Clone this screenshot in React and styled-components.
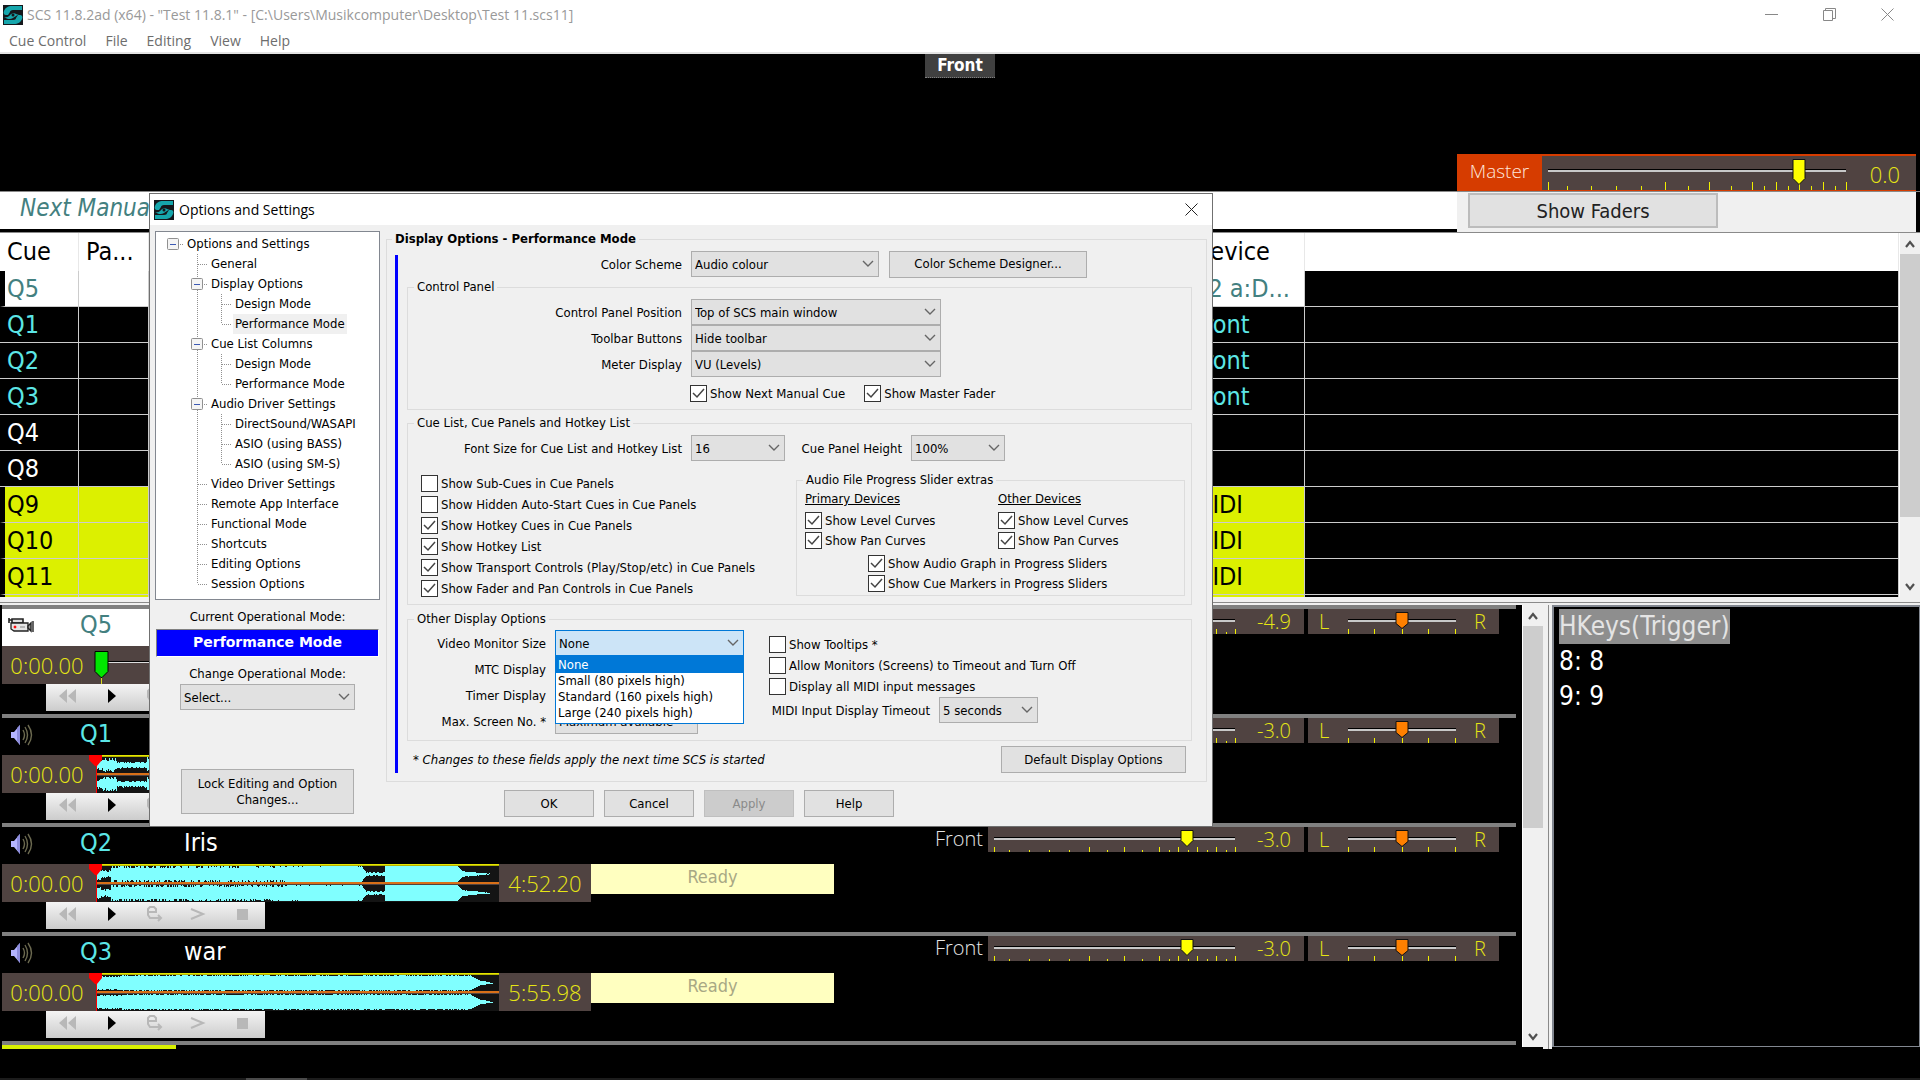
import React, { useState } from 'react'
import styled, { createGlobalStyle } from 'styled-components'

const uiFont = '"DejaVu Sans Condensed", "DejaVu Sans", sans-serif'
const titleFont = '"Open Sans", "Noto Sans", sans-serif'

const GlobalStyle = createGlobalStyle`
  * {
    box-sizing: border-box;
  }
  body {
    margin: 0;
    background: black;
    color: black;
    font-family: ${uiFont};
    font-size: 13px;
  }
  button, input, select {
    font: inherit;
    color: inherit;
    margin: 0;
  }
  svg {
    display: block;
    flex: none;
  }
`

/* ---------- main window ---------- */

const Page = styled.div`
  position: relative;
  display: flex;
  flex-direction: column;
  min-height: 100vh;
  overflow: hidden;
`
const TitleBar = styled.header`
  display: flex;
  align-items: center;
  gap: 4px;
  height: 29px;
  padding: 0 4px 0 3px;
  background: white;
  color: #999999;
  font-family: ${titleFont};
  font-size: 14px;
`
const WindowButtons = styled.div`
  display: flex;
  margin-left: auto;
`
const WindowButton = styled.button`
  display: flex;
  align-items: center;
  justify-content: center;
  width: 58px;
  height: 28px;
  padding: 0;
  border: none;
  background: none;
`
const MenuBar = styled.nav`
  display: flex;
  gap: 19px;
  height: 25px;
  padding: 0 9px;
  border-bottom: 2px solid #e4e4e4;
  background: white;
`
const MenuItem = styled.button`
  padding: 0;
  border: none;
  background: none;
  color: #6d6d6d;
  font-family: ${titleFont};
  font-size: 14px;
  line-height: 24px;
`
const ControlPanel = styled.section`
  display: grid;
  grid-template-columns: 1fr auto 1fr;
  height: 137px;
`
const OutputName = styled.div`
  grid-column: 2;
  align-self: start;
  width: 70px;
  height: 24px;
  background: #404040;
  border-bottom: 1px dotted #808080;
  color: white;
  font-size: 17px;
  font-weight: bold;
  line-height: 23px;
  text-align: center;
`
const MasterFader = styled.div`
  grid-column: 3;
  place-self: end;
  display: flex;
  width: 459px;
  height: 37px;
  margin-right: 4px;
  border: solid #d63c00;
  border-width: 2px 0 1px;
  background: #504341;
`
const MasterLabel = styled.label`
  width: 85px;
  background: #d63c00;
  color: #ffe6dc;
  font-family: ${titleFont};
  font-size: 19px;
  font-weight: 300;
  line-height: 30px;
  text-align: center;
`
const NextRow = styled.section`
  display: flex;
  height: 42px;
  padding-right: 4px;
  border-top: 1px solid #8a8a8a;
  border-bottom: 1px solid #8a8a8a;
`
const NextBand = styled.div`
  flex: 1;
  padding-left: 20px;
  border-bottom: 3px solid black;
  background: white;
`
const NextCue = styled.div`
  width: 129px;
  overflow: hidden;
  color: #438080;
  font-size: 24px;
  font-style: italic;
  line-height: 32px;
  white-space: nowrap;
`
const FadersBox = styled.div`
  width: 459px;
  padding: 1px 11px;
  background: #f0f0f0;
`
const FadersButton = styled.button`
  width: 250px;
  height: 35px;
  border: 2px solid #bcbcbc;
  background: #e1e1e1;
  color: #222222;
  font-size: 20px;
`
const CueList = styled.section`
  display: flex;
  height: 364px;
  overflow: hidden;
`
const CueScroll = styled.div`
  flex: 1;
  overflow: hidden;
`
const CueTable = styled.table`
  width: 100%;
  border-collapse: separate;
  border-spacing: 0;
  table-layout: fixed;
  font-size: 25px;
  line-height: 34px;
`
const Th = styled.th`
  width: ${(p) => p.$w};
  height: 38px;
  padding: 0 0 0 7px;
  border-right: 1px solid #e8e8e8;
  background: white;
  font-weight: normal;
  text-align: left;
`
const CueRow = styled.tr`
  background: ${(p) => p.$bg};
  color: ${(p) => p.$fg};
`
const Td = styled.td`
  height: 36px;
  padding: 0 0 0 ${(p) => (p.$strip ? 2 : 7)}px;
  border-left: ${(p) => (p.$strip ? '5px solid black' : 'none')};
  border-right: 1px solid #cccccc;
  border-bottom: 1px solid #cccccc;
  background: ${(p) => (p.$empty ? 'black' : 'none')};
  white-space: nowrap;
`
const ScrollBar = styled.div`
  display: flex;
  flex-direction: column;
  justify-content: space-between;
  align-items: center;
  width: 21px;
  background: #f0f0f0;
  border-left: 1px solid white;
`
const ScrollButton = styled.button`
  display: flex;
  align-items: center;
  justify-content: center;
  width: 100%;
  height: 21px;
  padding: 0;
  border: none;
  background: none;
`
const ScrollThumb = styled.div`
  width: 100%;
  height: ${(p) => p.$size};
  margin-bottom: auto;
  background: #cdcdcd;
`
const Splitter = styled.div`
  height: 8px;
  background: linear-gradient(#f0f0f0 5px, #8a8a8a 5px 6px, #f0f0f0 6px);
`
const Work = styled.main`
  display: flex;
  align-items: flex-start;
`
const Panels = styled.div`
  flex: 1;
  padding: 0 6px 0 2px;
`
const Panel = styled.article`
  height: 109px;
  border-top: 4px solid #808080;
`
const PanelTop = styled.div`
  display: flex;
  height: 37px;
  padding-right: 17px;
  background: linear-gradient(to right, ${(p) => (p.$current ? 'white' : 'black')} 1180px, black 1180px);
`
const PanelIcon = styled.div`
  width: 78px;
  padding: 5px 6px;
`
const PanelCue = styled.div`
  width: 104px;
  color: ${(p) => (p.$current ? '#438080' : '#5ce6e6')};
  font-size: 25px;
  line-height: 32px;
`
const PanelTitle = styled.div`
  flex: 1;
  color: white;
  font-size: 25px;
  line-height: 32px;
`
const DeviceName = styled.div`
  margin-right: 5px;
  color: #e6e6e6;
  font-family: ${titleFont};
  font-size: 20px;
  font-weight: 300;
  line-height: 24px;
`
const FaderBox = styled.div`
  display: flex;
  align-items: center;
  justify-content: space-between;
  width: ${(p) => p.$w}px;
  height: 25px;
  margin-right: 4px;
  padding: 0 13px 0 ${(p) => p.$pad}px;
  background: #504341;
  color: #e6e614;
  font-family: ${titleFont};
  font-size: 20px;
  font-weight: 300;
  &:last-child {
    margin-right: 0;
  }
`
const SliderStack = styled.div`
  display: grid;
  & > * {
    grid-area: 1 / 1;
  }
`
const Range = styled.input`
  appearance: none;
  width: ${(p) => p.$w}px;
  height: ${(p) => p.$h}px;
  background: linear-gradient(
    transparent ${(p) => p.$y}px,
    black ${(p) => p.$y}px ${(p) => p.$y + 1}px,
    #c8c8c8 ${(p) => p.$y + 1}px ${(p) => p.$y + 3}px,
    transparent ${(p) => p.$y + 3}px
  );
  &::-webkit-slider-thumb {
    appearance: none;
    width: 14px;
    height: 20px;
    background: transparent;
  }
`
const MasterValue = styled.output`
  flex: 1;
  padding-top: 3px;
  color: #e6e614;
  font-family: ${titleFont};
  font-size: 22px;
  font-weight: 300;
  line-height: 30px;
  text-align: center;
`
const PanelMiddle = styled.div`
  display: flex;
  width: 832px;
`
const ProgressBox = styled.div`
  display: flex;
  width: 589px;
  height: 38px;
  background: #504341;
`
const Time = styled.div`
  width: ${(p) => p.$w}px;
  padding-left: ${(p) => p.$pad || 0}px;
  color: #e6e614;
  font-family: ${titleFont};
  font-size: 22px;
  font-weight: 300;
  line-height: 38px;
  text-align: center;
`
const Status = styled.div`
  flex: 1;
  height: 30px;
  background: #ffffc0;
  color: #a8a884;
  font-size: 18px;
  line-height: 26px;
  text-align: center;
`
const Transport = styled.div`
  display: flex;
  width: 219px;
  height: 27px;
  margin-left: 44px;
  background: linear-gradient(#f4f4f4, #cccccc);
`
const TransportButton = styled.button`
  display: flex;
  flex: 1;
  align-items: center;
  justify-content: center;
  padding: 0 2px 3px 0;
  border: none;
  background: none;
`
const PanelEnd = styled.div`
  height: 8px;
  border-top: 4px solid #808080;
`
const YellowBar = styled.div`
  width: 174px;
  height: 4px;
  background: #d8f000;
`
const Gap = styled.div`
  align-self: stretch;
  width: 9px;
  background: linear-gradient(to right, #f0f0f0 5px, #8a8a8a 5px 6px, #f0f0f0 6px);
`
const BottomScroll = styled(ScrollBar)`
  height: 442px;
`
const HotkeyList = styled.ul`
  width: 368px;
  height: 442px;
  margin: 0;
  padding: 2px 5px;
  border: 1px solid #828790;
  border-width: 2px 1px 1px 2px;
  color: white;
  font-size: 26px;
  line-height: 35px;
  list-style: none;
`
const HotkeyHead = styled.span`
  display: inline-block;
  background: #8e8e8e;
  color: #e4e4e4;
`
const Footer = styled.footer`
  height: 2px;
  margin-top: auto;
  background: linear-gradient(to right, #1c1c1c 246px, #4a4a4a 246px 307px, #1c1c1c 307px);
`

/* ---------- options dialog ---------- */

const Dialog = styled.div`
  position: absolute;
  top: 193px;
  left: 149px;
  width: 1064px;
  padding-bottom: 4px;
  border: 1px solid #707070;
  background: #f0f0f0;
`
const DialogTitle = styled.div`
  display: flex;
  align-items: center;
  gap: 5px;
  height: 31px;
  padding-left: 4px;
  background: white;
  font-family: ${titleFont};
  font-size: 14px;
`
const CloseButton = styled(WindowButton)`
  width: 42px;
  margin-left: auto;
`
const DialogBody = styled.div`
  display: flex;
  gap: 6px;
  padding: 6px 5px 5px;
`
const Side = styled.div`
  display: flex;
  flex-direction: column;
  align-items: center;
  width: 225px;
`
const Tree = styled.ul`
  width: 100%;
  height: 369px;
  margin: 0 0 7px;
  padding: 2px 5px;
  border: 1px solid #828790;
  background: white;
  list-style: none;
`
const TreeItem = styled.li`
  display: flex;
  height: 20px;
  padding-left: ${(p) => (p.$depth ? 24 : 0)}px;
`
const TreeText = styled.span`
  padding: 0 2px;
  background: ${(p) => (p.$selected ? '#f0f0f0' : 'none')};
  line-height: 20px;
`
const SideLabel = styled.label`
  line-height: 20px;
`
const ModeBox = styled.div`
  width: 223px;
  height: 28px;
  margin: 2px 0 7px;
  border: 1px solid;
  border-color: #808080 white white #808080;
  background: blue;
  color: white;
  font-family: "DejaVu Sans", sans-serif;
  font-size: 14px;
  font-weight: bold;
  line-height: 24px;
  text-align: center;
`
const Button = styled.button`
  width: ${(p) => p.$w}px;
  height: ${(p) => p.$h || 27}px;
  padding: 0;
  border: 1px solid #adadad;
  background: #e1e1e1;
  line-height: 16px;
  &:disabled {
    border-color: #bfbfbf;
    background: #cccccc;
    color: #8a8a8a;
  }
`
const Main = styled.div`
  flex: 1;
`
const Group = styled.fieldset`
  min-width: 0;
  margin: 0;
  padding: 0;
  border: 1px solid #dcdcdc;
`
const PageGroup = styled(Group)`
  height: 551px;
`
const Legend = styled.legend`
  margin-left: ${(p) => (p.$bold ? 5 : 6)}px;
  padding: 0 3px;
  line-height: 16px;
  font-weight: ${(p) => (p.$bold ? 'bold' : 'normal')};
`
const Inner = styled.div`
  display: flex;
  gap: 9px;
  padding: 4px 14px 0 8px;
`
const BlueLine = styled.div`
  width: 3px;
  height: 518px;
  margin-top: 4px;
  background: blue;
`
const Fields = styled.div`
  flex: 1;
`
const Line = styled.div`
  display: flex;
  align-items: center;
  height: 26px;
`
const FieldLabel = styled.label`
  width: ${(p) => p.$w}px;
  padding-right: 9px;
  text-align: right;
`
const Combo = styled.span`
  display: grid;
  align-items: center;
  width: ${(p) => p.$w}px;
  height: 26px;
  & > * {
    grid-area: 1 / 1;
  }
  & > svg {
    margin-right: 5px;
    justify-self: end;
    pointer-events: none;
  }
`
const SelectBox = styled.select`
  appearance: none;
  width: 100%;
  height: 26px;
  padding: 0 3px;
  border: 1px solid ${(p) => (p.$open ? '#0078d7' : '#adadad')};
  border-radius: 0;
  background: ${(p) => (p.$open ? '#cce4f7' : '#e1e1e1')};
`
const CheckLabel = styled.label`
  display: flex;
  align-items: center;
  gap: 3px;
  height: ${(p) => p.$h || 21}px;
  margin-left: ${(p) => p.$indent || 0}px;
`
const Tick = styled.span`
  display: grid;
  place-items: center;
  & > * {
    grid-area: 1 / 1;
  }
  & > svg {
    pointer-events: none;
  }
`
const CheckInput = styled.input`
  appearance: none;
  width: 17px;
  height: 17px;
  border: 1px solid #333333;
  background: white;
`
const ControlGroup = styled(Group)`
  height: 131px;
  margin-top: 2px;
`
const ListGroup = styled(Group)`
  height: 190px;
  margin-top: 5px;
`
const OtherGroup = styled(Group)`
  height: 130px;
  margin-top: 6px;
`
const ComboStack = styled.div`
  padding-top: 4px;
`
const CheckRow = styled.div`
  display: flex;
  gap: 19px;
  padding: 6px 0 0 282px;
`
const Columns = styled.div`
  display: flex;
  padding-top: ${(p) => p.$top}px;
`
const ChecksColumn = styled.div`
  width: ${(p) => p.$w}px;
  padding: ${(p) => p.$pad || '0'};
`
const ExtrasGroup = styled(Group)`
  width: 389px;
  height: 124px;
`
const Devices = styled.div`
  display: grid;
  grid-template-columns: 193px 1fr;
  padding: 2px 0 3px 8px;
`
const DeviceHead = styled.u`
  height: 20px;
  line-height: 18px;
`
const DropWrap = styled.div`
  position: relative;
`
const DropList = styled.ul`
  position: absolute;
  top: 26px;
  left: 147px;
  z-index: 1;
  width: 189px;
  height: 68px;
  margin: 0;
  padding: 0;
  border: 1px solid #0078d7;
  background: white;
  list-style: none;
`
const DropOption = styled.li`
  padding-left: 2px;
  background: ${(p) => (p.$active ? '#0078d7' : 'none')};
  color: ${(p) => (p.$active ? 'white' : 'black')};
  line-height: 16px;
`
const NoteRow = styled.div`
  display: flex;
  align-items: center;
  justify-content: space-between;
  padding: 5px 6px 0 6px;
`
const DialogButtons = styled.div`
  display: flex;
  gap: 10px;
  padding: 8px 0 0 118px;
`

const Logo = () => (
  <svg width="20" height="20" viewBox="0 0 20 20">
    <rect width="20" height="20" fill="#15181c" />
    <path d="M19 1v4h-9c-2 0-3 1-3 2l-2 3H3C1 10 0 8 1 6c1-3 4-5 8-5z" fill="#16a6ac" />
    <path d="M1 19v-4h9c2 0 3-1 3-2l2-3h2c2 0 3 2 2 4-1 3-4 5-8 5z" fill="#16a6ac" />
    <path d="M1 12c4 1 5-1 7-3 2-1 4-1 5 0l3 1c-3 0-4 2-6 3-3 2-6 1-9-1z" fill="#16a6ac" />
    <circle cx="10" cy="10" r="1.500" fill="#15181c" />
  </svg>
)

const Cross = ({ size = 13, color = '#222222' }) => (
  <svg width={size} height={size} viewBox="0 0 13 13" fill="none" stroke={color}>
    <path d="M0.5 0.5l12 12M12.5 0.5l-12 12" />
  </svg>
)

const Chevron = () => (
  <svg width="12" height="8" viewBox="0 0 12 8" fill="none" stroke="#666666" strokeWidth="1.4">
    <path d="M1 1l5 5 5-5" />
  </svg>
)

const Arrow = ({ up }) => (
  <svg width="10" height="8" viewBox="0 0 10 8" fill="none" stroke="#505050" strokeWidth="2.2">
    <path d={up ? 'M1 7l4-5 4 5' : 'M1 1l4 5 4-5'} />
  </svg>
)

const Speaker = () => (
  <svg width="26" height="24" viewBox="0 0 26 24" fill="none">
    <path d="M3 9h3l6-7v20l-6-7H3z" fill="#b4b4ff" />
    <path d="M9 5l3-3v20l-3-4z" fill="#8c8cdc" />
    <path d="M15 7q3 5 0 10M17 4q5 8 0 16M20 2q7 10 0 20" stroke="#6c6a50" strokeWidth="1.4" />
  </svg>
)

const Camera = () => (
  <svg width="27" height="24" viewBox="0 0 27 24" stroke="#222222">
    <path d="M1 4v5M1 6h3M4 5h11v4H4z" fill="#dddddd" strokeWidth="1.6" />
    <path d="M3 9h17v8H6l-3-2z" fill="#e6e6e6" strokeWidth="1.3" />
    <path d="M20 12l3-3v8l-3-3zM25 7v11" fill="#999999" strokeWidth="1.4" />
    <circle cx="7" cy="13" r="1" fill="red" stroke="red" />
    <path d="M12 13h5" stroke="#888888" />
  </svg>
)

const transportIcons = {
  rewind: <path d="M9 1v14L1 8zM18 1v14l-8-7z" fill="#b8b8b8" />,
  play: <path d="M6 1l8 7-8 7z" fill="black" />,
  release: (
    <path
      d="M3 6h8V3L9 1H5L3 3v6l2 3h11M13 9l3 3-3 3"
      fill="none"
      stroke="#b8b8b8"
      strokeWidth="2"
    />
  ),
  next: <path d="M2 3l12 5-12 5" fill="none" stroke="#b8b8b8" strokeWidth="2" />,
  stop: <path d="M4 3h11v11H4z" fill="#b8b8b8" />,
}

const levelTicks = [0, 15, 35, 55, 75, 95, 113, 130, 148, 165, 175, 184, 194, 203, 213, 222, 232, 241]
const tallTicks = [0, 95, 130, 165, 184, 203, 222, 241]

const LevelSlider = ({ id, label, w = 241, h = 25, pos }) => {
  const [value, setValue] = useState(pos)
  const s = w / 241
  const x = Math.round(value * s) + 7
  const b = h === 25 ? 19 : 28
  return (
    <SliderStack>
      <Range id={id} type="range" min="0" max="241" value={value} aria-label={label} $w={w} $h={h} $y={h === 25 ? 10 : 13} onChange={(e) => setValue(Number(e.target.value))} />
      <svg width={w + 14} height={h} style={{ marginLeft: -7, pointerEvents: 'none' }}>
        {levelTicks.map((t) => (
          <rect key={t} x={Math.round(t * s) + 7} y={h - (tallTicks.includes(t) ? (h === 25 ? 5 : 8) : h === 25 ? 2 : 4)} width="1" height="8" fill="#f0f000" />
        ))}
        <path d={`M${x - 6} 3.5h12v${b - 9}l-6 6-6-6z`} fill="yellow" stroke="#111111" />
      </svg>
    </SliderStack>
  )
}

const PanSlider = () => {
  const [value, setValue] = useState(54)
  return (
    <SliderStack>
      <Range type="range" min="0" max="108" value={value} aria-label="Pan" $w={108} $h={25} $y={10} onChange={(e) => setValue(Number(e.target.value))} />
      <svg width="108" height="25" style={{ pointerEvents: 'none' }}>
        {[0, 26, 54, 80, 107].map((t) => (
          <rect key={t} x={t} y="20" width="1" height="5" fill="#f0f000" />
        ))}
        <path d={`M${value - 6} 3.5h12v11l-6 5-6-5z`} fill="#ff8000" stroke="#111111" />
      </svg>
    </SliderStack>
  )
}

/* peak height (0..1) at each pixel of a track */
const envelopes = {
  Q1: (x, r) => (x < 6 ? 0.3 + r * 0.4 : x < 20 ? 0.5 + r * 0.4 : x < 50 ? 0.22 + r * 0.22 : 0.6 + r * 0.4),
  Q2: (x, r) => {
    if (x < 4) return 0.6 + r * 0.2
    if (x < 14) return 0.25 + r * 0.25
    if (x < 90) return r > 0.55 ? 1 : 0.7 + r * 0.3
    if (x < 190) return r > 0.35 ? 1 : 0.75 + r * 0.4
    if (x < 264) return r > 0.06 ? 1 : 0.85
    if (x < 269) return 1 - (x - 264) * 0.16
    if (x < 288) return 0.12 + r * 0.14
    if (x < 360) return 1
    if (x < 365) return 1 - (x - 360) * 0.14
    return Math.max(0, 0.32 - (x - 365) * 0.012 + r * 0.08)
  },
  Q3: (x, r) => {
    if (x < 374) return (x < 25 ? 0.72 : 0.84) + r * 0.16
    if (x < 384) return 0.85 - (x - 374) * 0.06
    return Math.max(0, 0.3 - (x - 384) * 0.028)
  },
}

const wavePath = (cue, mid, half, seed) => {
  const end = cue === 'Q2' ? 393 : cue === 'Q3' ? 396 : 402
  let n = seed
  const rand = () => {
    n = (n * 16807) % 2147483647
    return n / 2147483647
  }
  let d = ''
  for (let x = 0; x < end; x++) {
    const up = Math.round(envelopes[cue](x, rand()) * half)
    const down = Math.round(envelopes[cue](x, rand()) * half)
    d += `M${x} ${mid - up}h1v${Math.max(1, up + down)}h-1z`
  }
  return d
}

const Wave = ({ cue }) => (
  <svg width="411" height="38" viewBox="-9 0 411 38">
    <rect width="402" height="38" fill="#141414" />
    <path d={wavePath(cue, 10, 8, 7919)} fill="#80ffff" />
    <path d={wavePath(cue, 29, 8, 10007)} fill="#80ffff" />
    <rect width="402" height="1" fill="#e6e600" />
    <rect width="402" height="1" y="1" fill="#b4b400" />
    <rect width="402" height="2" y="18" fill="#d87018" />
    <rect width="402" height="1" y="20" fill="#504341" />
    <path d="M-8 0h13v5l-5 6h-2l-6-6z" fill="red" />
    <rect x="-1" width="1" height="38" fill="red" />
  </svg>
)

const VideoProgress = () => (
  <svg width="411" height="38" viewBox="-9 0 411 38">
    <path d="M4 16.5h390" stroke="#dddddd" />
    <path d="M4 15.5h390" stroke="black" />
    <rect x="4" y="32" width="1" height="6" fill="#d8d81e" />
    <path d="M-2 5.500h13v20l-6 6h-1l-6-6z" fill="#00e600" stroke="black" />
  </svg>
)

const ScrollArrows = ({ thumb, as: Bar = ScrollBar }) => (
  <Bar>
    <ScrollButton aria-label="Scroll up"><Arrow up /></ScrollButton>
    <ScrollThumb $size={thumb} />
    <ScrollButton aria-label="Scroll down"><Arrow /></ScrollButton>
  </Bar>
)

const cues = [
  { cue: 'Q5', device: 'V2 a:D...', bg: 'white', fg: '#438080', strip: true },
  { cue: 'Q1', device: 'Front', bg: 'black', fg: '#5ce6e6' },
  { cue: 'Q2', device: 'Front', bg: 'black', fg: '#5ce6e6' },
  { cue: 'Q3', device: 'Front', bg: 'black', fg: '#5ce6e6' },
  { cue: 'Q4', device: '', bg: 'black', fg: 'white' },
  { cue: 'Q8', device: '', bg: 'black', fg: 'white' },
  { cue: 'Q9', device: 'MIDI', bg: '#dcf000', fg: 'black', strip: true },
  { cue: 'Q10', device: 'MIDI', bg: '#dcf000', fg: 'black', strip: true },
  { cue: 'Q11', device: 'MIDI', bg: '#dcf000', fg: 'black', strip: true },
  { cue: '', device: '', bg: '#dcf000', fg: 'black', strip: true },
]

const panels = [
  { cue: 'Q5', title: '', device: '', level: '-4.9', pos: 184, current: true },
  { cue: 'Q1', title: '', device: 'Front', level: '-3.0', pos: 193 },
  { cue: 'Q2', title: 'Iris', device: 'Front', level: '-3.0', pos: 193, length: '4:52.20', status: 'Ready' },
  { cue: 'Q3', title: 'war', device: 'Front', level: '-3.0', pos: 193, length: '5:55.98', status: 'Ready' },
]

const tree = [
  { text: 'Options and Settings', depth: 0, box: true },
  { text: 'General', depth: 1 },
  { text: 'Display Options', depth: 1, box: true },
  { text: 'Design Mode', depth: 2 },
  { text: 'Performance Mode', depth: 2, last: true, selected: true },
  { text: 'Cue List Columns', depth: 1, box: true },
  { text: 'Design Mode', depth: 2 },
  { text: 'Performance Mode', depth: 2, last: true },
  { text: 'Audio Driver Settings', depth: 1, box: true },
  { text: 'DirectSound/WASAPI', depth: 2 },
  { text: 'ASIO (using BASS)', depth: 2 },
  { text: 'ASIO (using SM-S)', depth: 2, last: true },
  { text: 'Video Driver Settings', depth: 1 },
  { text: 'Remote App Interface', depth: 1 },
  { text: 'Functional Mode', depth: 1 },
  { text: 'Shortcuts', depth: 1 },
  { text: 'Editing Options', depth: 1 },
  { text: 'Session Options', depth: 1, last: true },
]

const Guide = ({ box, last, line, root }) => (
  <svg width="24" height="20" fill="none" stroke="#909090" strokeDasharray="1 1">
    {!root && <path d={last ? 'M12.5 0v10' : 'M12.5 0v20'} />}
    {!line && <path d="M13 10.5h10" />}
    {box && (
      <g strokeDasharray="none">
        <rect x="6.500" y="4.500" width="11" height="11" rx="1" fill="#f4f4f4" />
        <path d="M9 10.500h6" stroke="#3c5ab4" />
      </g>
    )}
  </svg>
)

const Select = ({ id, w, options, open, label }) => (
  <Combo $w={w}>
    <SelectBox id={id} $open={open} aria-label={label}>
      {options.map((o) => (
        <option key={o}>{o}</option>
      ))}
    </SelectBox>
    <Chevron />
  </Combo>
)

const Check = ({ label, on, h, indent }) => {
  const [checked, setChecked] = useState(!!on)
  return (
    <CheckLabel $h={h} $indent={indent}>
      <Tick>
        <CheckInput type="checkbox" checked={checked} onChange={() => setChecked(!checked)} />
        {checked && (
          <svg width="13" height="11" viewBox="0 0 13 11" fill="none" stroke="#444444" strokeWidth="1.5">
            <path d="M1 5l4 4 7-8" />
          </svg>
        )}
      </Tick>
      {label}
    </CheckLabel>
  )
}

const Field = ({ id, label, labelWidth, w, options, open }) => (
  <Line>
    <FieldLabel htmlFor={id} $w={labelWidth}>{label}</FieldLabel>
    <Select id={id} w={w} options={options} open={open} />
  </Line>
)

const sizes = ['None', 'Small (80 pixels high)', 'Standard (160 pixels high)', 'Large (240 pixels high)']

const OptionsDialog = () => {
  return (
    <Dialog role="dialog" aria-label="Options and Settings">
      <DialogTitle>
        <Logo />
        Options and Settings
        <CloseButton aria-label="Close"><Cross /></CloseButton>
      </DialogTitle>
      <DialogBody>
        <Side>
          <Tree role="tree">
            {tree.map((t, i) => (
              <TreeItem key={i} role="treeitem" $depth={t.depth}>
                {t.depth === 2 && <Guide line />}
                <Guide box={t.box} last={t.last} root={t.depth === 0} />
                <TreeText $selected={t.selected}>{t.text}</TreeText>
              </TreeItem>
            ))}
          </Tree>
          <SideLabel as="div">Current Operational Mode:</SideLabel>
          <ModeBox>Performance Mode</ModeBox>
          <SideLabel htmlFor="mode">Change Operational Mode:</SideLabel>
          <Select id="mode" w={175} options={['Select...']} />
          <Columns $top={59}>
            <Button $w={173} $h={45}>Lock Editing and Option<br />Changes...</Button>
          </Columns>
        </Side>
        <Main>
          <PageGroup>
            <Legend $bold>Display Options - Performance Mode</Legend>
            <Inner>
              <BlueLine />
              <Fields>
                <Line>
                  <FieldLabel htmlFor="scheme" $w={284}>Color Scheme</FieldLabel>
                  <Select id="scheme" w={188} options={['Audio colour']} />
                  <ChecksColumn $w={208} $pad="0 0 0 10px">
                    <Button $w={198}>Color Scheme Designer...</Button>
                  </ChecksColumn>
                </Line>
                <ControlGroup>
                  <Legend>Control Panel</Legend>
                  <ComboStack>
                    <Field id="position" label="Control Panel Position" labelWidth={283} w={250} options={['Top of SCS main window']} />
                    <Field id="toolbar" label="Toolbar Buttons" labelWidth={283} w={250} options={['Hide toolbar']} />
                    <Field id="meter" label="Meter Display" labelWidth={283} w={250} options={['VU (Levels)']} />
                  </ComboStack>
                  <CheckRow>
                    <Check label="Show Next Manual Cue" on />
                    <Check label="Show Master Fader" on />
                  </CheckRow>
                </ControlGroup>
                <ListGroup>
                  <Legend>Cue List, Cue Panels and Hotkey List</Legend>
                  <Columns $top={4}>
                    <Field id="fontsize" label="Font Size for Cue List and Hotkey List" labelWidth={283} w={94} options={['16']} />
                    <Field id="height" label="Cue Panel Height" labelWidth={126} w={94} options={['100%']} />
                  </Columns>
                  <Columns $top={11}>
                    <ChecksColumn $w={388} $pad="1px 0 0 13px">
                      <Check label="Show Sub-Cues in Cue Panels" />
                      <Check label="Show Hidden Auto-Start Cues in Cue Panels" />
                      <Check label="Show Hotkey Cues in Cue Panels" on />
                      <Check label="Show Hotkey List" on />
                      <Check label="Show Transport Controls (Play/Stop/etc) in Cue Panels" on />
                      <Check label="Show Fader and Pan Controls in Cue Panels" on />
                    </ChecksColumn>
                    <ExtrasGroup>
                      <Legend>Audio File Progress Slider extras</Legend>
                      <Devices>
                        <DeviceHead>Primary Devices</DeviceHead>
                        <DeviceHead>Other Devices</DeviceHead>
                        <Check label="Show Level Curves" on h={20} />
                        <Check label="Show Level Curves" on h={20} />
                        <Check label="Show Pan Curves" on h={20} />
                        <Check label="Show Pan Curves" on h={20} />
                      </Devices>
                      <Check label="Show Audio Graph in Progress Sliders" on h={20} indent={71} />
                      <Check label="Show Cue Markers in Progress Sliders" on h={20} indent={71} />
                    </ExtrasGroup>
                  </Columns>
                </ListGroup>
                <OtherGroup>
                  <Legend>Other Display Options</Legend>
                  <Columns $top={3}>
                    <ChecksColumn $w={361}>
                      <DropWrap>
                        <Field id="monitor" label="Video Monitor Size" labelWidth={147} w={189} options={sizes} open />
                        <DropList role="listbox">
                          {sizes.map((o) => (
                            <DropOption key={o} role="option" $active={o === 'None'}>{o}</DropOption>
                          ))}
                        </DropList>
                        <Field id="mtc" label="MTC Display" labelWidth={147} w={143} options={['']} />
                        <Field id="timer" label="Timer Display" labelWidth={147} w={143} options={['']} />
                        <Field id="screen" label="Max. Screen No. *" labelWidth={147} w={143} options={['Maximum available']} />
                      </DropWrap>
                    </ChecksColumn>
                    <ChecksColumn $w={420} $pad="4px 0 0 0">
                      <Check label="Show Tooltips *" />
                      <Check label="Allow Monitors (Screens) to Timeout and Turn Off" />
                      <Check label="Display all MIDI input messages" />
                      <Field id="timeout" label="MIDI Input Display Timeout" labelWidth={170} w={99} options={['5 seconds']} />
                    </ChecksColumn>
                  </Columns>
                </OtherGroup>
                <NoteRow>
                  <em>* Changes to these fields apply the next time SCS is started</em>
                  <Button $w={185}>Default Display Options</Button>
                </NoteRow>
              </Fields>
            </Inner>
          </PageGroup>
          <DialogButtons>
            <Button $w={90}>OK</Button>
            <Button $w={90}>Cancel</Button>
            <Button $w={90} disabled>Apply</Button>
            <Button $w={90}>Help</Button>
          </DialogButtons>
        </Main>
      </DialogBody>
    </Dialog>
  )
}

export default function App() {
  return (
    <Page>
      <GlobalStyle />
      <TitleBar>
        <Logo />
        SCS 11.8.2ad (x64) - "Test 11.8.1" - [C:\Users\Musikcomputer\Desktop\Test 11.scs11]
        <WindowButtons>
          <WindowButton aria-label="Minimize">
            <svg width="13" height="2"><rect width="13" height="1" fill="#888888" /></svg>
          </WindowButton>
          <WindowButton aria-label="Restore">
            <svg width="13" height="13" viewBox="0 0 13 13" fill="none" stroke="#888888">
              <path d="M0.500 2.500h9v10h-9zM2.500 2.500v-2h10v10h-3" />
            </svg>
          </WindowButton>
          <WindowButton aria-label="Close"><Cross color="#888888" /></WindowButton>
        </WindowButtons>
      </TitleBar>
      <MenuBar>
        {['Cue Control', 'File', 'Editing', 'View', 'Help'].map((m) => (
          <MenuItem key={m}>{m}</MenuItem>
        ))}
      </MenuBar>
      <ControlPanel>
        <OutputName>Front</OutputName>
        <MasterFader>
          <MasterLabel htmlFor="master">Master</MasterLabel>
          <ChecksColumn $w={312} $pad="0 0 0 6px">
            <LevelSlider id="master" label="Master" w={298} h={34} pos={203} />
          </ChecksColumn>
          <MasterValue>0.0</MasterValue>
        </MasterFader>
      </ControlPanel>
      <NextRow>
        <NextBand>
          <NextCue>Next Manual</NextCue>
        </NextBand>
        <FadersBox>
          <FadersButton>Show Faders</FadersButton>
        </FadersBox>
      </NextRow>
      <CueList>
        <CueScroll>
          <CueTable>
            <thead>
              <tr>
                <Th $w="79px">Cue</Th>
                <Th $w="70px">Pa...</Th>
                <Th $w="auto" aria-label="Description" />
                <Th $w="119px">Device</Th>
                <Th $w="594px" aria-label="Filler" />
              </tr>
            </thead>
            <tbody>
              {cues.map((c) => (
                <CueRow key={c.cue} $bg={c.bg} $fg={c.fg}>
                  <Td $strip={c.strip}>{c.cue}</Td>
                  <Td />
                  <Td />
                  <Td>{c.device}</Td>
                  <Td $empty />
                </CueRow>
              ))}
            </tbody>
          </CueTable>
        </CueScroll>
        <ScrollArrows thumb="263px" />
      </CueList>
      <Splitter />
      <Work>
        <Panels>
          {panels.map((p) => (
            <Panel key={p.cue}>
              <PanelTop $current={p.current}>
                <PanelIcon>{p.current ? <Camera /> : <Speaker />}</PanelIcon>
                <PanelCue $current={p.current}>{p.cue}</PanelCue>
                <PanelTitle>{p.title}</PanelTitle>
                <DeviceName>{p.device}</DeviceName>
                <FaderBox $w={316} $pad={6}>
                  <LevelSlider label={`${p.cue} level`} pos={p.pos} />
                  <span>{p.level}</span>
                </FaderBox>
                <FaderBox $w={191} $pad={11}>
                  <span>L</span>
                  <PanSlider />
                  <span>R</span>
                </FaderBox>
              </PanelTop>
              <PanelMiddle>
                <ProgressBox>
                  <Time $w={86} $pad={4}>0:00.00</Time>
                  {p.current ? <VideoProgress /> : <Wave cue={p.cue} />}
                  <Time $w={92}>{p.length}</Time>
                </ProgressBox>
                {p.status && <Status>{p.status}</Status>}
              </PanelMiddle>
              <Transport>
                {Object.keys(transportIcons).map((name) => (
                  <TransportButton key={name} aria-label={name}>
                    <svg width="18" height="16">{transportIcons[name]}</svg>
                  </TransportButton>
                ))}
              </Transport>
            </Panel>
          ))}
          <PanelEnd>
            <YellowBar />
          </PanelEnd>
        </Panels>
        <ScrollArrows as={BottomScroll} thumb="202px" />
        <Gap />
        <HotkeyList>
          <li><HotkeyHead>HKeys(Trigger)</HotkeyHead></li>
          <li>8: 8</li>
          <li>9: 9</li>
        </HotkeyList>
      </Work>
      <Footer />
      <OptionsDialog />
    </Page>
  )
}
